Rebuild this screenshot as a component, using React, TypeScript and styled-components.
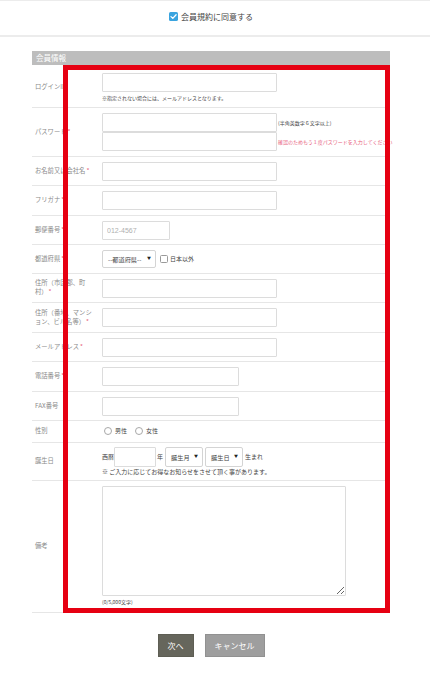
import React from "react";
import styled, { createGlobalStyle } from "styled-components";

const Global = createGlobalStyle`
  html, body { margin: 0; padding: 0; background: #fff; }
  body { font-family: "Noto Sans CJK JP", "Noto Sans", "Liberation Sans", sans-serif; color: #333; }
  * { box-sizing: border-box; }
`;

const Page = styled.div`
  width: 430px;
  min-height: 675px;
  background: #fff;
`;

const TopBar = styled.div`
  height: 37px;
  border-top: 1px solid #ececec;
  border-bottom: 2px solid #ececec;
  display: flex;
  align-items: center;
  padding-left: 32px;
`;

const AgreeInner = styled.div`
  width: 358px;
  display: flex;
  justify-content: center;
  align-items: center;
  gap: 3px;
  font-size: 8px;
  line-height: 10px;
  color: #444;
  padding-bottom: 3px;
`;

const Container = styled.div`
  position: relative;
  margin: 14px 0 0 32px;
  width: 358px;
`;

const SectionHead = styled.div`
  height: 14px;
  background: #bdbdbd;
  color: #fff;
  font-size: 7.5px;
  line-height: 14px;
  padding-left: 4px;
`;

const Row = styled.div<{ $pt?: number; $pb?: number }>`
  display: flex;
  border-bottom: 1px solid #e6e6e6;
  padding: ${(p) => p.$pt ?? 5}px 0 ${(p) => p.$pb ?? 4.5}px;
`;

const Label = styled.div`
  width: 70px;
  flex-shrink: 0;
  align-self: center;
  padding: 0 9px 0 3px;
  font-size: 6.3px;
  line-height: 8.7px;
  color: #8a8a8a;
  line-break: loose;
`;

const Req = styled.span`
  color: #e8607c;
  margin-left: 1px;
`;

const Field = styled.div`
  flex: 1;
  display: flex;
  flex-direction: column;
  align-items: flex-start;
`;

const Input = styled.input<{ $w: number; $h?: number }>`
  display: block;
  width: ${(p) => p.$w}px;
  height: ${(p) => p.$h ?? 19}px;
  border: 1px solid #dcdcdc;
  border-radius: 1px;
  background: #fff;
  margin: 0;
  padding: 0 4px;
  font-family: "Liberation Sans", "Noto Sans CJK JP", sans-serif;
  font-size: 7px;
  color: #333;
  outline: none;
  &::placeholder { color: #b0b0b0; }
`;

const Note = styled.div<{ $size?: number; $mt?: number; $color?: string }>`
  font-size: ${(p) => p.$size ?? 5}px;
  line-height: 8px;
  margin-top: ${(p) => p.$mt ?? 0}px;
  color: ${(p) => p.$color ?? "#444"};
  white-space: nowrap;
`;

const Line = styled.div`
  display: flex;
  align-items: center;
`;

const SideNote = styled.span<{ $color?: string }>`
  font-size: 5px;
  line-height: 8px;
  color: ${(p) => p.$color ?? "#444"};
  white-space: nowrap;
  margin-left: 1px;
`;

const SelectBox = styled.div<{ $w: number; $h?: number }>`
  width: ${(p) => p.$w}px;
  height: ${(p) => p.$h ?? 19}px;
  border: 1px solid #d4d4d4;
  border-radius: 2px;
  background: #fff;
  display: flex;
  align-items: center;
  justify-content: space-between;
  padding: 0 4px 0 5px;
  font-size: 6.2px;
  color: #444;
  flex-shrink: 0;
`;

const Arrow = styled.span`
  font-size: 4px;
  color: #222;
  margin-top: -2px;
`;

const SmallText = styled.span<{ $ml?: number; $mr?: number }>`
  font-size: 6px;
  line-height: 8px;
  color: #444;
  margin-left: ${(p) => p.$ml ?? 0}px;
  margin-right: ${(p) => p.$mr ?? 0}px;
  white-space: nowrap;
`;

const Check = styled.span`
  width: 8px;
  height: 8px;
  border: 1px solid #9a9a9a;
  border-radius: 1.5px;
  background: #fff;
  margin: 0 2px 0 4px;
  flex-shrink: 0;
`;

const Radio = styled.span<{ $ml?: number }>`
  width: 8px;
  height: 8px;
  border: 1px solid #a8a8a8;
  border-radius: 50%;
  background: #fff;
  margin: 0 3px 0 ${(p) => p.$ml ?? 2}px;
  flex-shrink: 0;
`;

const TextArea = styled.textarea`
  display: block;
  width: 244px;
  height: 110px;
  border: 1px solid #dcdcdc;
  border-radius: 1px;
  margin: 0;
  resize: both;
  outline: none;
`;

const Frame = styled.div`
  position: absolute;
  left: 31px;
  top: 14px;
  width: 327px;
  height: 548px;
  border: 5px solid #e60012;
  pointer-events: none;
`;

const Buttons = styled.div`
  margin: 21px 0 0 32px;
  width: 358px;
  display: flex;
  justify-content: center;
  gap: 11px;
`;

const Button = styled.button<{ $bg: string; $w: number }>`
  width: ${(p) => p.$w}px;
  height: 23px;
  background: ${(p) => p.$bg};
  border: 1px solid rgba(0, 0, 0, 0.08);
  color: #fff;
  font-family: "Noto Sans CJK JP", sans-serif;
  font-size: 8px;
  padding: 0;
  margin: 0;
  border-radius: 0;
`;

const BlueCheck = () => (
  <svg width="9" height="9" viewBox="0 0 9 9">
    <rect x="0" y="0" width="9" height="9" rx="1.6" fill="#3aa4df" />
    <path d="M2 4.6 L3.8 6.4 L7.1 2.7" stroke="#fff" strokeWidth="1.3" fill="none" strokeLinecap="round" strokeLinejoin="round" />
  </svg>
);

const R = () => <Req>*</Req>;

export default function App() {
  return (
    <Page>
      <Global />
      <TopBar>
        <AgreeInner>
          <BlueCheck />
          <span>会員規約に同意する</span>
        </AgreeInner>
      </TopBar>
      <Container>
        <SectionHead>会員情報</SectionHead>

        <Row $pt={8} $pb={5}>
          <Label>ログインID</Label>
          <Field>
            <Input $w={175} />
            <Note $mt={2}>※指定されない場合には、メールアドレスとなります。</Note>
          </Field>
        </Row>

        <Row $pt={5} $pb={4.5}>
          <Label>パスワード<R /></Label>
          <Field>
            <Line>
              <Input $w={175} type="password" />
              <SideNote>(半角英数字６文字以上)</SideNote>
            </Line>
            <Line>
              <Input $w={175} type="password" />
              <SideNote $color="#e8607c">確認のためもう１度パスワードを入力してください</SideNote>
            </Line>
          </Field>
        </Row>

        <Row>
          <Label>お名前又は会社名<R /></Label>
          <Field><Input $w={175} /></Field>
        </Row>

        <Row>
          <Label>フリガナ<R /></Label>
          <Field><Input $w={175} /></Field>
        </Row>

        <Row>
          <Label>郵便番号<R /></Label>
          <Field><Input $w={68} placeholder="012-4567" /></Field>
        </Row>

        <Row>
          <Label>都道府県<R /></Label>
          <Field>
            <Line>
              <SelectBox $w={54} $h={18}>
                <span>--都道府県--</span>
                <Arrow>▼</Arrow>
              </SelectBox>
              <Check />
              <SmallText>日本以外</SmallText>
            </Line>
          </Field>
        </Row>

        <Row>
          <Label>住所（市区郡、町村）<R /></Label>
          <Field><Input $w={175} /></Field>
        </Row>

        <Row>
          <Label>住所（番地、マンション、ビル名等）<R /></Label>
          <Field><Input $w={175} /></Field>
        </Row>

        <Row>
          <Label>メールアドレス<R /></Label>
          <Field><Input $w={175} /></Field>
        </Row>

        <Row>
          <Label>電話番号<R /></Label>
          <Field><Input $w={137} /></Field>
        </Row>

        <Row>
          <Label>FAX番号</Label>
          <Field><Input $w={137} /></Field>
        </Row>

        <Row $pt={6} $pb={6}>
          <Label>性別</Label>
          <Field>
            <Line>
              <Radio />
              <SmallText $mr={6}>男性</SmallText>
              <Radio $ml={2} />
              <SmallText>女性</SmallText>
            </Line>
          </Field>
        </Row>

        <Row $pt={4.5} $pb={4}>
          <Label>誕生日</Label>
          <Field>
            <Line>
              <SmallText>西暦</SmallText>
              <Input $w={42} $h={20} />
              <SmallText $ml={1} $mr={2}>年</SmallText>
              <SelectBox $w={38} $h={20}>
                <span>誕生月</span>
                <Arrow>▼</Arrow>
              </SelectBox>
              <SmallText $ml={2} />
              <SelectBox $w={38} $h={20}>
                <span>誕生日</span>
                <Arrow>▼</Arrow>
              </SelectBox>
              <SmallText $ml={2}>生まれ</SmallText>
            </Line>
            <Note $size={6} $mt={1}>※ ご入力に応じてお得なお知らせをさせて頂く事があります。</Note>
          </Field>
        </Row>

        <Row $pt={5} $pb={6}>
          <Label>備考</Label>
          <Field>
            <TextArea />
            <Note $mt={2}>(0/5,000文字)</Note>
          </Field>
        </Row>

        <Frame />
      </Container>

      <Buttons>
        <Button $bg="#66665c" $w={36}>次へ</Button>
        <Button $bg="#9e9e9e" $w={60}>キャンセル</Button>
      </Buttons>
    </Page>
  );
}
